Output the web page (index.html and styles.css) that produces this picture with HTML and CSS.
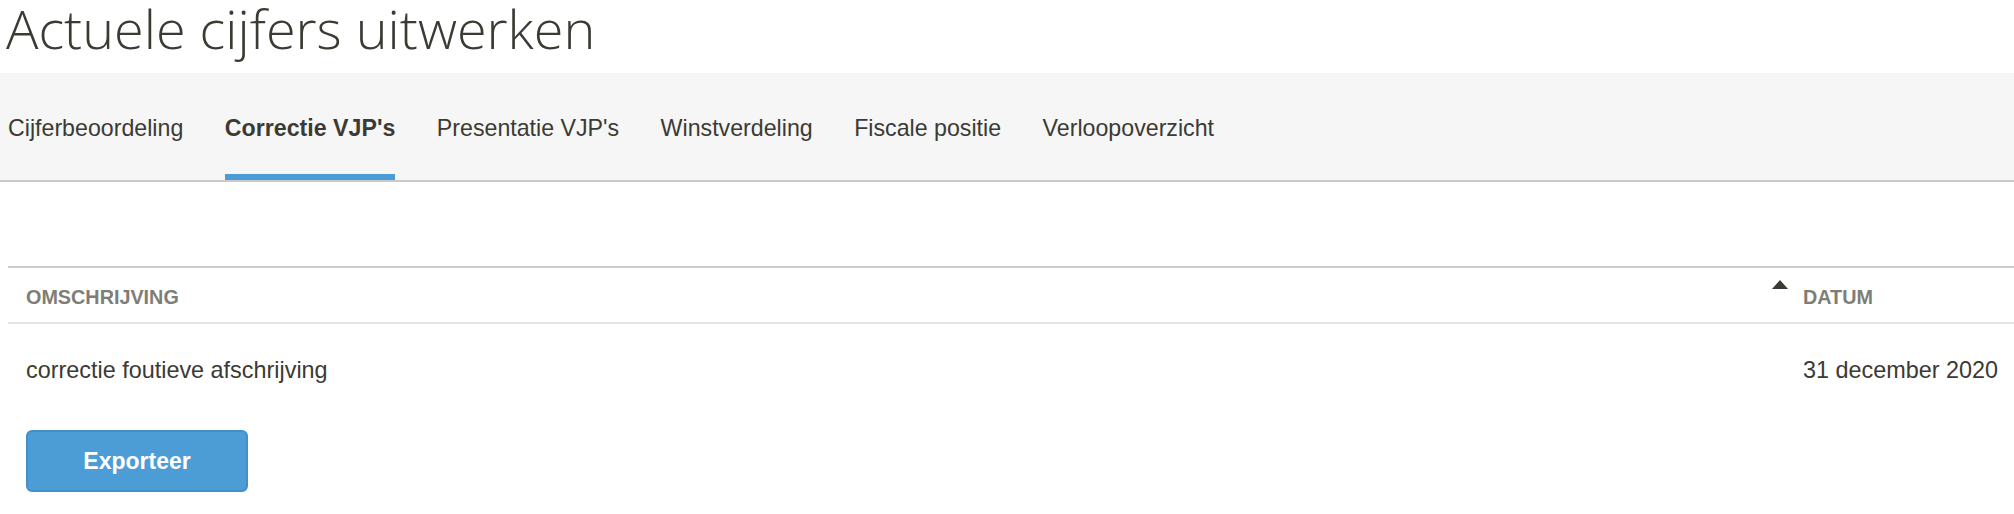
FILE: index.html
```html
<!DOCTYPE html>
<html lang="nl">
<head>
<meta charset="utf-8">
<title>Actuele cijfers uitwerken</title>
<link rel="stylesheet" href="styles.css">
</head>
<body>
  <h1 class="page-title">Actuele cijfers uitwerken</h1>
  <nav class="tabs">
    <a class="tab">Cijferbeoordeling</a>
    <a class="tab tab-active">Correctie VJP's</a>
    <a class="tab">Presentatie VJP's</a>
    <a class="tab">Winstverdeling</a>
    <a class="tab">Fiscale positie</a>
    <a class="tab">Verloopoverzicht</a>
  </nav>
  <section class="content">
    <div class="table">
      <div class="row head">
        <div class="cell">OMSCHRIJVING</div>
        <div class="cell sorted"><span class="sort-arrow"></span>DATUM</div>
      </div>
      <div class="row body">
        <div class="cell">correctie foutieve afschrijving</div>
        <div class="cell">31 december 2020</div>
      </div>
    </div>
    <button class="btn-export">Exporteer</button>
  </section>
</body>
</html>
```

FILE: styles.css
```css
html, body {
  margin: 0;
  padding: 0;
  background: #fff;
}
body {
  font-family: "Liberation Sans", Arial, sans-serif;
  color: #3b3a33;
}
.page-title {
  margin: 0 0 16px 0;
  padding-left: 6px;
  font-family: "Open Sans", sans-serif;
  font-weight: 300;
  font-size: 54px;
  line-height: 57px;
  color: #3b3a33;
  white-space: nowrap;
}
.tabs {
  display: flex;
  gap: 41.5px;
  padding-left: 8px;
  background: #f6f6f6;
  border-bottom: 2px solid #cacaca;
  height: 107px;
  align-items: stretch;
}
.tab {
  display: block;
  box-sizing: border-box;
  padding-top: 42px;
  font-size: 23.2px;
  line-height: 26px;
  color: #3b3a33;
  white-space: nowrap;
  border-bottom: 6px solid transparent;
}
.tab-active {
  font-weight: bold;
  border-bottom-color: #4a9bd6;
}
.content {
  padding: 84px 0 0 8px;
}
.table {
  border-top: 2px solid #cccccc;
}
.row {
  display: grid;
  grid-template-columns: 1fr 229px;
}
.cell {
  padding-left: 18px;
  white-space: nowrap;
}
.head {
  border-bottom: 2px solid #e3e3e3;
}
.head .cell {
  padding-top: 18px;
  padding-bottom: 14px;
  font-size: 19.8px;
  line-height: 22px;
  font-weight: bold;
  color: #7e7e76;
}
.sorted {
  position: relative;
}
.sort-arrow {
  position: absolute;
  left: -13px;
  top: 12px;
  width: 0;
  height: 0;
  border-left: 8.5px solid transparent;
  border-right: 8.5px solid transparent;
  border-bottom: 9px solid #3b3a33;
}
.body .cell {
  padding-top: 33px;
  padding-bottom: 33px;
  font-size: 23.4px;
  line-height: 26px;
}
.btn-export {
  display: block;
  margin: 14px 0 0 18px;
  width: 222px;
  height: 62px;
  box-sizing: border-box;
  background: #4c9dd6;
  border: 2px solid #4390c9;
  border-radius: 6px;
  color: #fff;
  font-family: "Liberation Sans", Arial, sans-serif;
  font-weight: bold;
  font-size: 23px;
  padding: 0;
}
```
